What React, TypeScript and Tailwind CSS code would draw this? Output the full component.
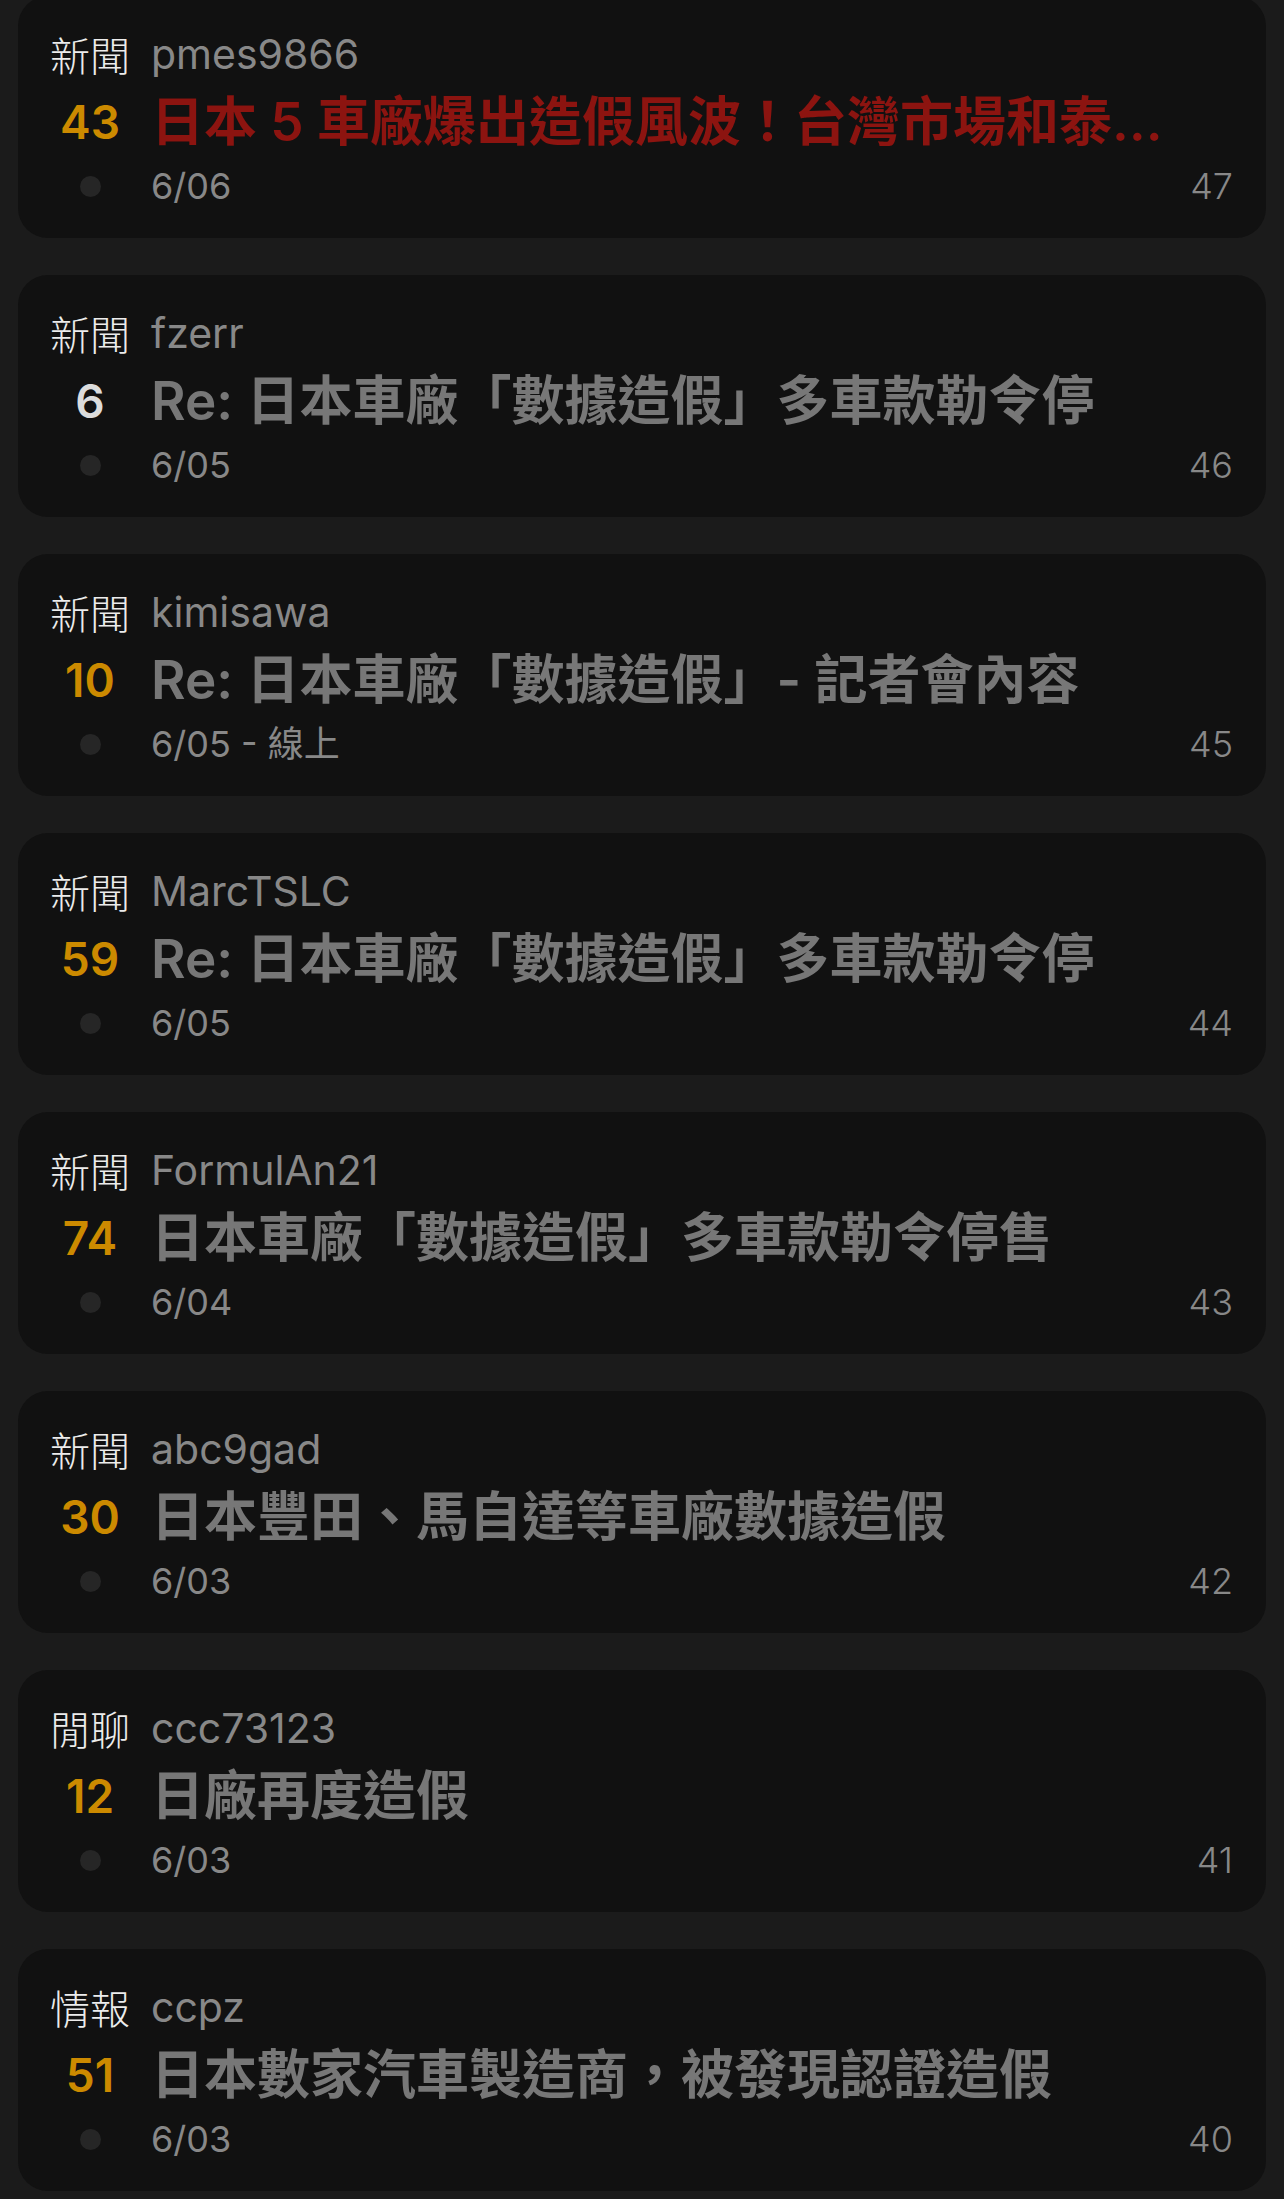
import React from "react";

type Post = {
  tag: string;
  author: string;
  count: number;
  title: string;
  date: string;
  no: number;
  hot?: boolean;
};

const posts: Post[] = [
  { tag: "新聞", author: "pmes9866", count: 43, title: "日本 5 車廠爆出造假風波！台灣市場和泰汽車回應", date: "6/06", no: 47, hot: true },
  { tag: "新聞", author: "fzerr", count: 6, title: "Re: 日本車廠「數據造假」多車款勒令停", date: "6/05", no: 46 },
  { tag: "新聞", author: "kimisawa", count: 10, title: "Re: 日本車廠「數據造假」- 記者會內容", date: "6/05 - 線上", no: 45 },
  { tag: "新聞", author: "MarcTSLC", count: 59, title: "Re: 日本車廠「數據造假」多車款勒令停", date: "6/05", no: 44 },
  { tag: "新聞", author: "FormulAn21", count: 74, title: "日本車廠「數據造假」多車款勒令停售", date: "6/04", no: 43 },
  { tag: "新聞", author: "abc9gad", count: 30, title: "日本豐田、馬自達等車廠數據造假", date: "6/03", no: 42 },
  { tag: "閒聊", author: "ccc73123", count: 12, title: "日廠再度造假", date: "6/03", no: 41 },
  { tag: "情報", author: "ccpz", count: 51, title: "日本數家汽車製造商，被發現認證造假", date: "6/03", no: 40 },
];

const font = "font-['Inter','Noto_Sans_CJK_TC',sans-serif]";

const PostCard = ({ post }: { post: Post }) => {
  return (
    <div className="rounded-[30px] bg-[#111111] pl-[32px] pr-[33px] pt-[28px] pb-[26px]">
      <div className="grid grid-cols-[80px_1fr] gap-x-[21px]">
        <div className="h-[60px] flex items-center justify-center text-[40px] leading-none text-[#ececec] font-['Noto_Sans_CJK_TC',sans-serif] font-light">
          {post.tag}
        </div>
        <div className="h-[60px] flex items-center text-[41px] leading-none text-[#888888]">
          {post.author}
        </div>

        <div
          className={
            "h-[76px] flex items-center justify-center text-[46px] leading-none font-semibold " +
            (post.count < 10 ? "text-[#dcdcdc]" : "text-[#cc8a00]")
          }
        >
          {post.count}
        </div>
        <div
          className={
            "h-[76px] flex items-center min-w-0 pr-[30px] text-[53px] leading-[1.3] font-semibold " +
            (post.hot ? "text-[#8c1410]" : "text-[#777777]")
          }
        >
          <span className="truncate">{post.title}</span>
        </div>

        <div className="h-[52px] flex items-center justify-center">
          <span className="w-[21px] h-[21px] rounded-full bg-[#262626]" />
        </div>
        <div className="h-[52px] flex items-center justify-between text-[36px] leading-none text-[#888888]">
          <span>{post.date}</span>
          <span className="font-light">{post.no}</span>
        </div>
      </div>
    </div>
  );
};

export default function App() {
  return (
    <div className={`min-h-screen bg-[#1b1b1b] overflow-hidden ${font}`}>
      <div className="-mt-[4px] flex flex-col gap-[37px] px-[18px]">
        {posts.map((p) => (
          <PostCard key={p.no} post={p} />
        ))}
      </div>
    </div>
  );
}
